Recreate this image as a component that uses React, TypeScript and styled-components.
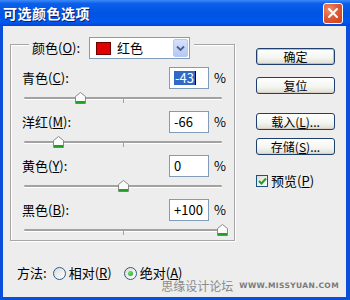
import React from "react";
import styled, { createGlobalStyle } from "styled-components";

const GlobalStyle = createGlobalStyle`
  html, body {
    margin: 0;
    padding: 0;
    background: #ffffff;
  }
  body {
    font-family: "Noto Sans CJK SC", "Liberation Sans", sans-serif;
    font-size: 13px;
    color: #000;
  }
`;

const Window = styled.div`
  width: 350px;
  height: 300px;
  display: flex;
  flex-direction: column;
  background: #0a4fdc;
  overflow: hidden;
`;

const TitleBar = styled.div`
  height: 26px;
  flex: none;
  display: flex;
  align-items: center;
  justify-content: space-between;
  padding: 0 7px 0 3px;
  background: linear-gradient(
    to bottom,
    #3d8af7 0%,
    #0a5fea 14%,
    #0054e3 50%,
    #0058ee 85%,
    #0046d8 100%
  );
`;

const Title = styled.div`
  color: #fff;
  font-weight: 700;
  font-size: 14px;
  letter-spacing: 0.5px;
  text-shadow: 1px 1px 0 #0a1f78;
  line-height: 1;
`;

const CloseButton = styled.div`
  width: 20px;
  height: 21px;
  box-sizing: border-box;
  border: 1px solid #fff;
  border-radius: 3px;
  background: radial-gradient(circle at 30% 30%, #f0906e 0%, #e05a36 45%, #c8401c 100%);
  display: flex;
  align-items: center;
  justify-content: center;
`;

const Client = styled.div`
  flex: 1;
  margin: 0 4px 3px 3px;
  background: #ededed;
  position: relative;
  display: flex;
  flex-direction: column;
`;

const Top = styled.div`
  display: flex;
  align-items: flex-start;
`;

const GroupBox = styled.div`
  margin: 18px 0 0 7px;
  width: 225px;
  height: 197px;
  box-sizing: border-box;
  border: 1px solid #a6a6a6;
  box-shadow: inset 1px 1px 0 #fff, 1px 1px 0 #fff;
  display: flex;
  flex-direction: column;
`;

const Legend = styled.div`
  margin: -8px 0 0 18px;
  padding: 0 4px 0 3px;
  align-self: flex-start;
  height: 22px;
  display: flex;
  align-items: center;
  gap: 9px;
  background: #ededed;
`;

const Label = styled.span`
  line-height: 14px;
  white-space: nowrap;
`;

const Select = styled.div`
  width: 101px;
  height: 22px;
  box-sizing: border-box;
  border: 1px solid #7f9db9;
  background: #fff;
  display: flex;
  align-items: center;
  padding: 0 1px 0 6px;
`;

const Swatch = styled.span<{ $color: string }>`
  width: 15px;
  height: 13px;
  box-sizing: border-box;
  background: ${(p) => p.$color};
  border: 1px solid #6a0000;
  margin-right: 6px;
`;

const SelectText = styled.span`
  flex: 1;
  line-height: 16px;
`;

const DropButton = styled.span`
  width: 15px;
  height: 18px;
  box-sizing: border-box;
  border: 1px solid #b7c9f2;
  border-radius: 2px;
  background: linear-gradient(to bottom, #d6e1fd, #b4c8f6);
  display: flex;
  align-items: center;
  justify-content: center;
`;

const Rows = styled.div`
  margin-top: 8px;
  display: flex;
  flex-direction: column;
`;

const Block = styled.div`
  display: flex;
  flex-direction: column;
  margin-bottom: 7px;
`;

const ValueRow = styled.div`
  height: 22px;
  display: flex;
  align-items: center;
  padding: 0 10px 0 11px;
`;

const RowLabel = styled(Label)`
  flex: 1;
`;

const NumberBox = styled.div`
  width: 40px;
  height: 22px;
  box-sizing: border-box;
  border: 1px solid #7f9db9;
  background: #fff;
  display: flex;
  align-items: center;
  padding-left: 4px;
  line-height: 14px;
`;

const Selected = styled.span`
  background: #316ac5;
  color: #fff;
  padding: 0 1px;
`;

const Caret = styled.span`
  width: 1px;
  height: 14px;
  background: #000;
`;

const Percent = styled.span`
  width: 10px;
  margin-left: 5px;
  line-height: 16px;
`;

const Slider = styled.div`
  position: relative;
  margin: 3px 0 0 13px;
  width: 198px;
  height: 12px;
`;

const Track = styled.div`
  position: absolute;
  left: 0;
  right: 0;
  top: 5px;
  height: 2px;
  border-radius: 1px;
  background: #a2a2a2;
  box-shadow: 0 1px 0 #fff;
`;

const Tick = styled.div`
  position: absolute;
  left: 99px;
  top: 7px;
  width: 1px;
  height: 4px;
  background: #a2a2a2;
`;

const Thumb = styled.svg`
  position: absolute;
  top: 0;
  width: 11px;
  height: 12px;
  margin-left: -5px;
`;

const Side = styled.div`
  margin: 22px 0 0 21px;
  width: 79px;
  display: flex;
  flex-direction: column;
`;

const Button = styled.div<{ $gap?: number; $default?: boolean }>`
  margin-top: ${(p) => p.$gap ?? 0}px;
  height: 17px;
  box-sizing: border-box;
  border: 1px solid #1f3f6e;
  border-radius: 3px;
  background: linear-gradient(to bottom, #ffffff 0%, #f4f4f0 60%, #dedcd4 100%);
  box-shadow: ${(p) =>
    p.$default ? "inset 0 0 0 1px #a8c2ee" : "inset 0 -1px 0 #d6d0c5"};
  display: flex;
  align-items: center;
  justify-content: center;
  font-size: 12px;
  line-height: 14px;
`;

const CheckRow = styled.div`
  margin-top: 19px;
  display: flex;
  align-items: center;
  gap: 3px;
`;

const CheckBox = styled.span`
  width: 12px;
  height: 12px;
  box-sizing: border-box;
  border: 1px solid #1c5180;
  background: linear-gradient(135deg, #dcdcd6, #ffffff);
  display: flex;
  align-items: center;
  justify-content: center;
`;

const MethodRow = styled.div`
  margin: 25px 0 0 14px;
  height: 14px;
  display: flex;
  align-items: center;
`;

const Radio = styled.span<{ $gap: number }>`
  margin-left: ${(p) => p.$gap}px;
  margin-right: 3px;
  width: 13px;
  height: 13px;
  box-sizing: border-box;
  border: 1px solid #2f5a8c;
  border-radius: 50%;
  background: linear-gradient(135deg, #dcdcd6, #ffffff);
  display: flex;
  align-items: center;
  justify-content: center;
`;

const Dot = styled.span`
  width: 5px;
  height: 5px;
  border-radius: 50%;
  background: radial-gradient(circle at 35% 35%, #6fe06f, #21a121);
`;

const Watermark = styled.div`
  position: absolute;
  right: 7px;
  bottom: 6px;
  display: flex;
  align-items: center;
  gap: 6px;
  color: #8a8a8a;
  pointer-events: none;
`;

const WatermarkCn = styled.span`
  font-size: 12px;
  line-height: 11px;
`;

const WatermarkUrl = styled.span`
  font-family: "DejaVu Sans", sans-serif;
  font-size: 7.5px;
  line-height: 10px;
  font-weight: 700;
  letter-spacing: 0.4px;
  color: #7a7a7a;
`;

type Channel = { name: string; key: string; value: number; selected?: boolean };

const channels: Channel[] = [
  { name: "青色", key: "C", value: -43, selected: true },
  { name: "洋红", key: "M", value: -66 },
  { name: "黄色", key: "Y", value: 0 },
  { name: "黑色", key: "B", value: 100 },
];

const fmt = (v: number) => (v > 0 ? `+${v}` : `${v}`);

const Mn = ({ t, k, tail = "" }: { t: string; k: string; tail?: string }) => (
  <>
    {t}(<u>{k}</u>){tail}
  </>
);

const ThumbIcon = ({ left }: { left: number }) => (
  <Thumb viewBox="0 0 11 12" style={{ left: `${left}%` }}>
    <path d="M0.5 4.5 L5.5 0.5 L10.5 4.5 L10.5 11.5 L0.5 11.5 Z" fill="#fbfbfb" stroke="#8a8a8a" />
    <rect x="1" y="9" width="9" height="2.5" fill="#21a121" />
  </Thumb>
);

export default function App() {
  return (
    <>
      <GlobalStyle />
      <Window>
        <TitleBar>
          <Title>可选颜色选项</Title>
          <CloseButton>
            <svg width="12" height="12" viewBox="0 0 12 12">
              <path d="M2 2 L10 10 M10 2 L2 10" stroke="#fff" strokeWidth="2" strokeLinecap="round" />
            </svg>
          </CloseButton>
        </TitleBar>
        <Client>
          <Top>
            <GroupBox>
              <Legend>
                <Label>
                  <Mn t="颜色" k="O" tail=":" />
                </Label>
                <Select>
                  <Swatch $color="#e00000" />
                  <SelectText>红色</SelectText>
                  <DropButton>
                    <svg width="9" height="7" viewBox="0 0 9 7">
                      <path d="M1 1.5 L4.5 5 L8 1.5" fill="none" stroke="#4d6185" strokeWidth="1.8" />
                    </svg>
                  </DropButton>
                </Select>
              </Legend>
              <Rows>
                {channels.map((c) => (
                  <Block key={c.key}>
                    <ValueRow>
                      <RowLabel>
                        <Mn t={c.name} k={c.key} tail=":" />
                      </RowLabel>
                      <NumberBox>
                        {c.selected ? (
                          <>
                            <Selected>{fmt(c.value)}</Selected>
                            <Caret />
                          </>
                        ) : (
                          fmt(c.value)
                        )}
                      </NumberBox>
                      <Percent>%</Percent>
                    </ValueRow>
                    <Slider>
                      <Track />
                      <Tick />
                      <ThumbIcon left={((c.value + 100) / 200) * 100} />
                    </Slider>
                  </Block>
                ))}
              </Rows>
            </GroupBox>
            <Side>
              <Button $default>确定</Button>
              <Button $gap={12}>复位</Button>
              <Button $gap={19}>
                <Mn t="载入" k="L" tail="..." />
              </Button>
              <Button $gap={8}>
                <Mn t="存储" k="S" tail="..." />
              </Button>
              <CheckRow>
                <CheckBox>
                  <svg width="9" height="8" viewBox="0 0 9 8">
                    <path d="M1 4 L3.5 6.5 L8 1.5" fill="none" stroke="#21a121" strokeWidth="2" />
                  </svg>
                </CheckBox>
                <Label>
                  <Mn t="预览" k="P" />
                </Label>
              </CheckRow>
            </Side>
          </Top>
          <MethodRow>
            <Label>方法:</Label>
            <Radio $gap={6} />
            <Label>
              <Mn t="相对" k="R" />
            </Label>
            <Radio $gap={12}>
              <Dot />
            </Radio>
            <Label>
              <Mn t="绝对" k="A" />
            </Label>
          </MethodRow>
          <Watermark>
            <WatermarkCn>思缘设计论坛</WatermarkCn>
            <WatermarkUrl>WWW.MISSYUAN.COM</WatermarkUrl>
          </Watermark>
        </Client>
      </Window>
    </>
  );
}
